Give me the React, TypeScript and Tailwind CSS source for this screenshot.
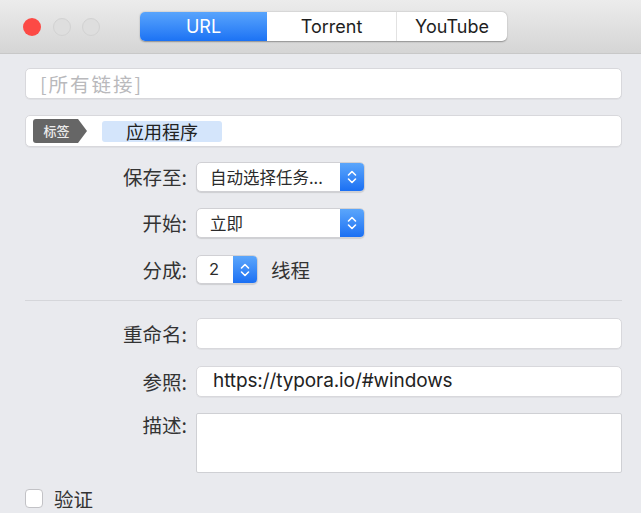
import React from 'react';

const cjk = "font-['Noto_Sans_CJK_SC','Noto_Sans',sans-serif]";
const latin = "font-['Inter','Noto_Sans_CJK_SC',sans-serif]";

/** Small up/down chevron pair drawn in the blue popup arrows. */
function UpDownChevrons(): React.ReactElement {
	return (
		<svg aria-hidden className="h-[18px] w-[12px]" fill="none" viewBox="0 0 12 18">
			<path d="M2.5 7 L6 3.5 L9.5 7" stroke="white" strokeLinecap="round" strokeLinejoin="round" strokeWidth="1.6" />
			<path d="M2.5 11 L6 14.5 L9.5 11" stroke="white" strokeLinecap="round" strokeLinejoin="round" strokeWidth="1.6" />
		</svg>
	);
}

function PopupButton({ value }: { value: string }): React.ReactElement {
	return (
		<div className="flex h-full w-[169px] overflow-hidden rounded-[5px] border border-[#d0d0d4] bg-white shadow-[0_1px_1px_rgba(0,0,0,0.12)]">
			<span className={`${cjk} flex flex-1 items-center pl-[13px] text-[16.5px] text-[#2b2b2b]`}>{value}</span>
			<span className="flex w-[24px] items-center justify-center bg-gradient-to-b from-[#5ba6fb] to-[#1a6ff3]">
				<UpDownChevrons />
			</span>
		</div>
	);
}

function Label({ children, top = false }: { children: React.ReactNode; top?: boolean }): React.ReactElement {
	return (
		<span
			className={`${cjk} flex justify-end text-[19.5px] leading-none text-[#333] ${top ? 'items-start pt-[2px]' : 'items-center'}`}
		>
			{children}
		</span>
	);
}

const fieldBox = 'rounded-[5px] border border-[#d8d8dc] bg-white shadow-[0_1px_0_rgba(0,0,0,0.04)]';

export default function App(): React.ReactElement {
	return (
		<div className="flex h-[513px] w-[641px] flex-col overflow-hidden bg-[#e9eaee]">
			{/* title bar */}
			<div className="flex h-[54px] shrink-0 items-center border-b border-[#c8c8c8] bg-gradient-to-b from-[#ececec] to-[#d5d5d5]">
				<div className="ml-[23px] flex items-center gap-[11.5px]">
					<span className="h-[18px] w-[18px] rounded-full bg-[#fc4a45]" />
					<span className="h-[18px] w-[18px] rounded-full border border-[#d2d2d2] bg-[#dedede]" />
					<span className="h-[18px] w-[18px] rounded-full border border-[#d2d2d2] bg-[#dedede]" />
				</div>
				<div
					className={`${latin} ml-[40px] flex h-[29px] w-[367px] overflow-hidden rounded-[5px] bg-white text-[18px] shadow-[0_0.5px_1.5px_rgba(0,0,0,0.35)]`}
				>
					<span className="flex w-[127px] items-center justify-center bg-gradient-to-b from-[#58a4fc] to-[#1b72f4] text-white">
						URL
					</span>
					<span className="flex w-[130px] items-center justify-center border-r border-[#e2e2e2] text-[#1e1e1e]">
						Torrent
					</span>
					<span className="flex flex-1 items-center justify-center text-[#1e1e1e]">YouTube</span>
				</div>
			</div>

			{/* content */}
			<div className="flex flex-col pl-[25px] pr-[19px] pt-[14px]">
				<div className={`${fieldBox} flex h-[31px] items-center pl-[14px]`}>
					<span className={`${cjk} text-[19.5px] tracking-[2px] text-[#b9b9bc]`}>[所有链接]</span>
				</div>

				<div className={`${fieldBox} mt-[16px] flex h-[32px] items-center pl-[7px]`}>
					<div className="flex h-[24px] items-center">
						<span className={`${cjk} flex h-full w-[45px] items-center justify-center rounded-l-[3px] bg-[#666] pl-[2px] text-[13px] font-medium text-[#ececec]`}>
							标签
						</span>
						<span className="h-0 w-0 border-y-[12px] border-l-[9px] border-y-transparent border-l-[#666]" />
					</div>
					<span
						className={`${cjk} ml-[15px] flex h-[21px] w-[120px] items-center justify-center rounded-[3px] bg-[#d4e5fb] text-[18px] text-[#222]`}
					>
						应用程序
					</span>
				</div>

				<div className="mt-[15px] grid grid-cols-[162px_1fr] gap-x-[9px]">
					<Label>保存至:</Label>
					<div className="h-[30px]">
						<PopupButton value="自动选择任务..." />
					</div>
				</div>

				<div className="mt-[16px] grid grid-cols-[162px_1fr] gap-x-[9px]">
					<Label>开始:</Label>
					<div className="h-[30px]">
						<PopupButton value="立即" />
					</div>
				</div>

				<div className="mt-[17px] grid grid-cols-[162px_1fr] gap-x-[9px]">
					<Label>分成:</Label>
					<div className="flex h-[29px] items-center">
						<div className="flex h-full w-[62px] overflow-hidden rounded-[5px] border border-[#d0d0d4] bg-white shadow-[0_1px_1px_rgba(0,0,0,0.12)]">
							<span className={`${latin} flex flex-1 items-center pl-[12px] text-[16.5px] text-[#2b2b2b]`}>2</span>
							<span className="flex w-[24px] items-center justify-center bg-gradient-to-b from-[#5ba6fb] to-[#1a6ff3]">
								<UpDownChevrons />
							</span>
						</div>
						<span className={`${cjk} ml-[13px] text-[19.5px] text-[#333]`}>线程</span>
					</div>
				</div>

				<div className="mt-[16px] h-px bg-[#d5d6da]" />

				<div className="mt-[17px] grid grid-cols-[162px_1fr] gap-x-[9px]">
					<Label>重命名:</Label>
					<div className={`${fieldBox} h-[31px]`} />
				</div>

				<div className="mt-[17px] grid grid-cols-[162px_1fr] gap-x-[9px]">
					<Label>参照:</Label>
					<div className={`${fieldBox} flex h-[31px] items-center pl-[16px]`}>
						<span className={`${latin} text-[19px] tracking-[-0.1px] text-[#222]`}>https://typora.io/#windows</span>
					</div>
				</div>

				<div className="mt-[16px] grid grid-cols-[162px_1fr] gap-x-[9px]">
					<Label top>描述:</Label>
					<div className="h-[60px] rounded-[2px] border border-[#cfd0d4] bg-white" />
				</div>

				<label className="mt-[16px] flex items-center gap-[11px]">
					<span className="h-[19px] w-[18px] rounded-[4px] border border-[#c2c2c6] bg-white" />
					<span className={`${cjk} text-[19.5px] leading-none text-[#333]`}>验证</span>
				</label>
			</div>
		</div>
	);
}
